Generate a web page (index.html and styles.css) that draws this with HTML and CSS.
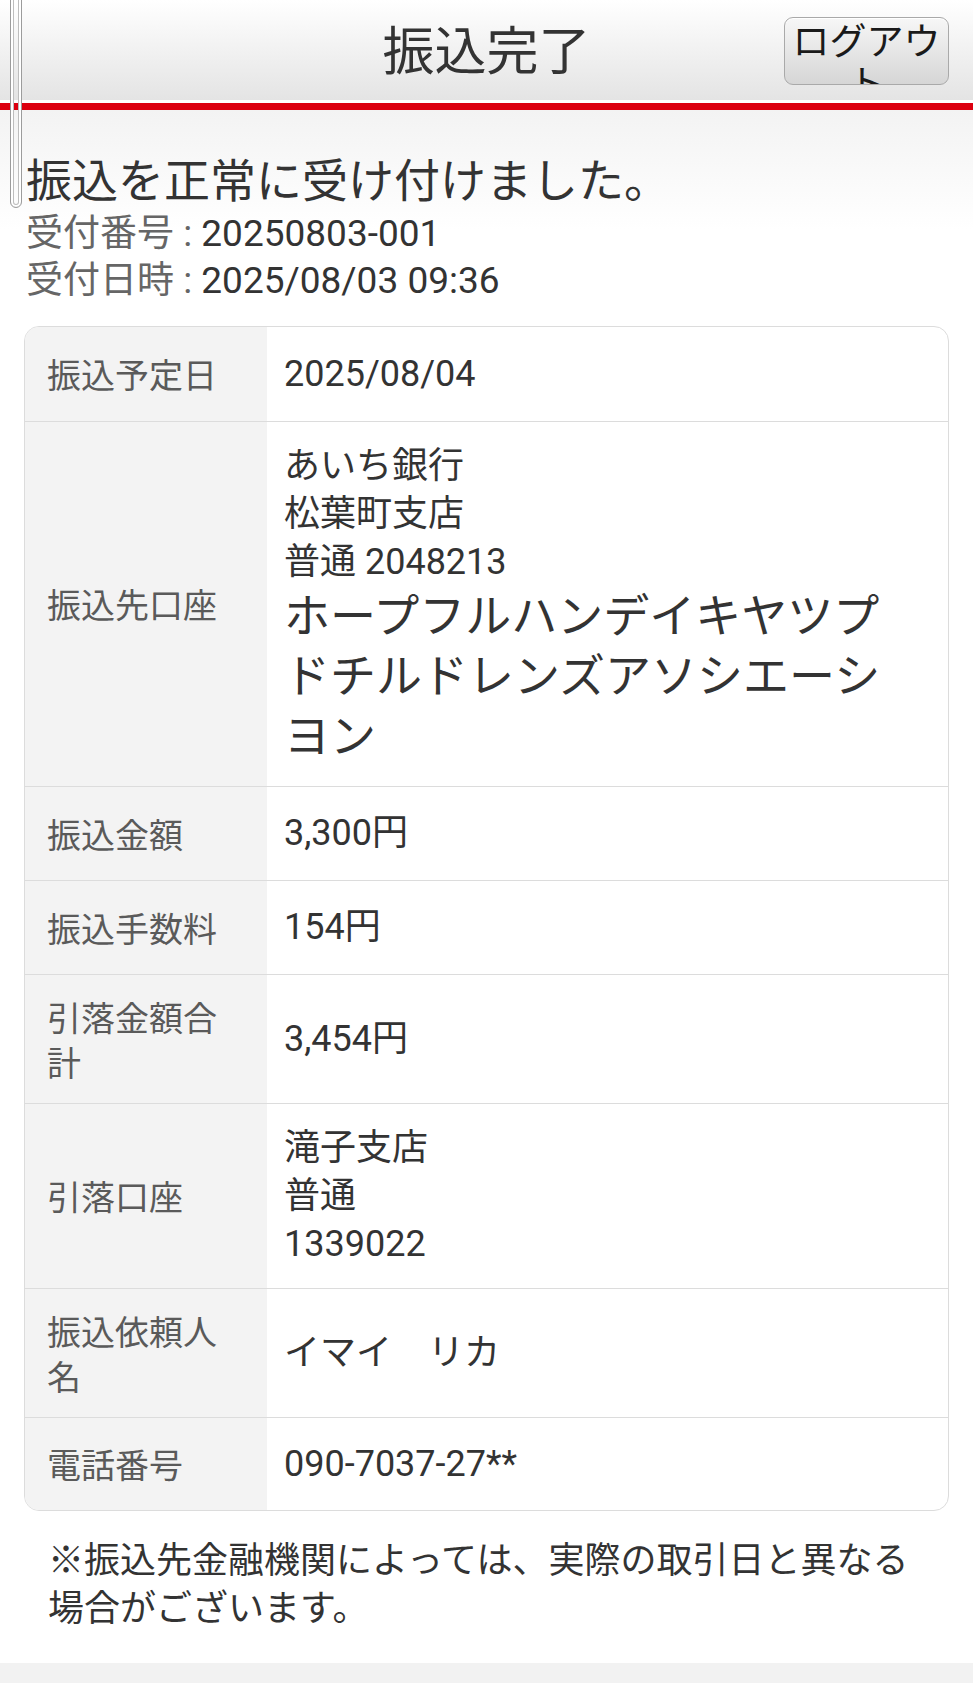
FILE: index.html
```html
<!DOCTYPE html>
<html lang="ja">
<head>
  <meta charset="UTF-8" />
  <meta name="viewport" content="width=device-width, initial-scale=1.0" />
  <title>振込完了</title>
  <link rel="stylesheet" href="styles.css">
</head>
<body>
  <!-- ヘッダー -->
  <header class="header">
    <h1 class="header-title">振込完了</h1>
    <button class="logout-btn">ログアウト</button>
  </header>
  <div class="header-line"></div>
  <div class="scroll-thumb"></div>

  <main class="content">
    <h2 class="done-message">振込を正常に受け付けました。</h2>
    <div class="receipt-info">
      <div><span class="info-label">受付番号 :</span> 20250803-001</div>
      <div><span class="info-label">受付日時 :</span> 2025/08/03 09:36</div>
    </div>

    <div class="detail-box">
      <table class="detail-table">
        <tr>
          <th>振込予定日</th>
          <td>2025/08/04</td>
        </tr>
        <tr>
          <th>振込先口座</th>
          <td>
            あいち銀行<br>
            松葉町支店<br>
            普通 2048213<br>
            <span class="kana-name">ホープフルハンデイキヤツプドチルドレンズアソシエーシヨン</span>
          </td>
        </tr>
        <tr>
          <th>振込金額</th>
          <td>3,300円</td>
        </tr>
        <tr>
          <th>振込手数料</th>
          <td>154円</td>
        </tr>
        <tr>
          <th>引落金額合計</th>
          <td>3,454円</td>
        </tr>
        <tr>
          <th>引落口座</th>
          <td>滝子支店<br>普通<br>1339022</td>
        </tr>
        <tr>
          <th>振込依頼人名</th>
          <td>イマイ　リカ</td>
        </tr>
        <tr>
          <th>電話番号</th>
          <td>090-7037-27**</td>
        </tr>
      </table>
    </div>

    <p class="note">※振込先金融機関によっては、実際の取引日と異なる場合がございます。</p>
  </main>

  <footer class="footer"></footer>
</body>
</html>
```

FILE: styles.css
```css
:root {
  --text-color: #333;
  --label-color: #5a5a5a;
  --border-color: #dcdcdc;
  --label-bg: #f3f3f3;
  --accent-red: #dc0010;
}

body {
  margin: 0;
  font-family: Roboto, "Noto Sans CJK JP", sans-serif;
  color: var(--text-color);
  background: #fff;
  position: relative;
}

/* ヘッダー */
.header {
  height: 100px;
  background: linear-gradient(#ffffff, #e4e4e4);
  display: flex;
  justify-content: center;
  align-items: center;
  position: relative;
}

.header-title {
  margin: 0;
  font-size: 52px;
  font-weight: 400;
  color: #333;
  line-height: 1;
  padding-top: 6px;
}

.logout-btn {
  position: absolute;
  top: 17px;
  right: 24px;
  width: 165px;
  height: 68px;
  padding: 0 6px;
  overflow: hidden;
  font-family: "Noto Sans CJK JP", sans-serif;
  font-size: 37px;
  line-height: 42px;
  color: #1a1a1a;
  text-align: center;
  vertical-align: top;
  display: block;
  background: linear-gradient(#f7f7f7, #d6d6d6);
  border: 1px solid #a9a9a9;
  border-radius: 9px;
  box-shadow: inset 0 1px 0 #fff;
}

.header-line {
  height: 7px;
  background: var(--accent-red);
  border-top: 3px solid #fff;
}

.scroll-thumb {
  position: absolute;
  left: 10px;
  top: -10px;
  width: 10px;
  height: 216px;
  border: 1px solid #9c9c9c;
  border-radius: 0 0 6px 6px;
  box-shadow: inset 0 0 0 2px #fff, inset 0 0 0 3px #bdbdbd;
}

/* 本文 */
.content {
  padding: 0 24px 30px;
  background: linear-gradient(#f3f3f3, #fff 120px);
}

.done-message {
  margin: 0;
  padding-top: 42px;
  font-size: 46px;
  font-weight: 400;
  line-height: 58px;
  color: #333;
  padding-left: 2px;
}

.receipt-info {
  font-size: 37px;
  line-height: 47px;
  padding-left: 2px;
  margin-bottom: 22px;
}

.info-label {
  color: #666;
}

.detail-box {
  border: 1px solid var(--border-color);
  border-radius: 15px;
  overflow: hidden;
}

.detail-table {
  width: 100%;
  border-collapse: collapse;
}

.detail-table tr {
  height: 94px;
  border-bottom: 1px solid var(--border-color);
}

.detail-table tr:last-child {
  border-bottom: none;
  height: 93px;
}

.detail-table th {
  width: 242px;
  box-sizing: border-box;
  padding: 19px 22px;
  background: var(--label-bg);
  color: var(--label-color);
  font-size: 34px;
  font-weight: 400;
  line-height: 45px;
  text-align: left;
  vertical-align: middle;
  font-family: "Noto Sans CJK JP", sans-serif;
}

.detail-table td {
  padding: 20px 40px 20px 17px;
  font-size: 36px;
  line-height: 48px;
  vertical-align: middle;
  color: var(--text-color);
}

.kana-name {
  display: block;
  font-size: 46px;
  line-height: 60px;
}

.note {
  margin: 26px 0 0;
  padding: 0 24px;
  font-size: 36px;
  line-height: 48px;
  color: #333;
}

.footer {
  height: 60px;
  background: #f2f2f2;
}
```
